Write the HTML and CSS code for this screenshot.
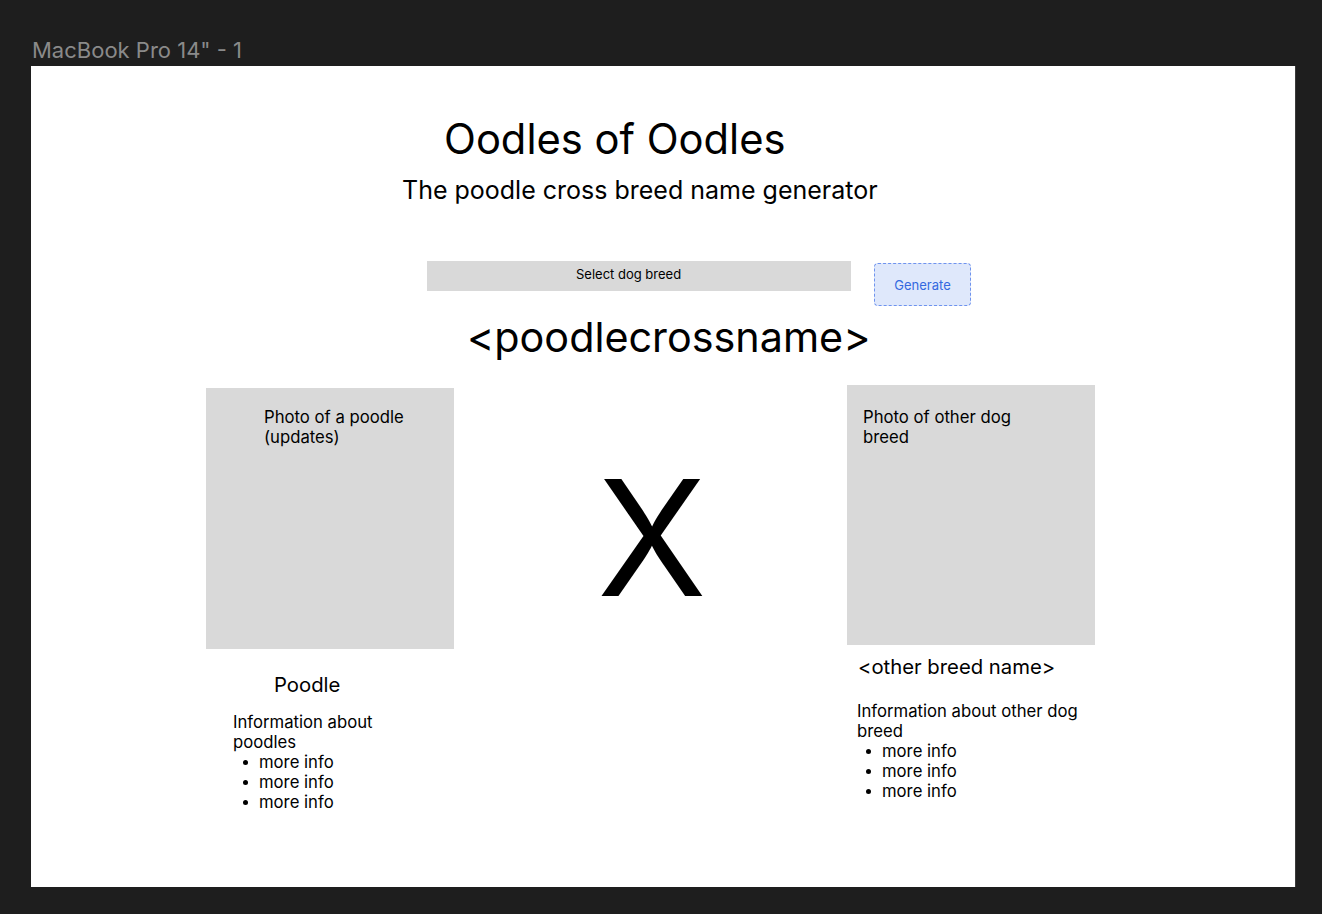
FILE: index.html
```html
<!DOCTYPE html>
<html lang="en">
<head>
<meta charset="utf-8">
<title>Oodles of Oodles</title>
<link rel="stylesheet" href="styles.css">
</head>
<body>
<div class="frame-label">MacBook Pro 14" - 1</div>
<main class="frame">
  <h1 class="title">Oodles of Oodles</h1>
  <p class="subtitle">The poodle cross breed name generator</p>
  <div class="controls">
    <div class="select">Select dog breed</div>
    <button class="generate">Generate</button>
  </div>
  <h2 class="crossname">&lt;poodlecrossname&gt;</h2>
  <section class="breeds">
    <div class="col col-left">
      <div class="photo photo-left">Photo of a poodle<br>(updates)</div>
      <h3 class="breed-name name-left">Poodle</h3>
      <div class="info info-left">
        <p>Information about<br>poodles</p>
        <ul>
          <li>more info</li>
          <li>more info</li>
          <li>more info</li>
        </ul>
      </div>
    </div>
    <div class="cross">X</div>
    <div class="col col-right">
      <div class="photo photo-right">Photo of other dog<br>breed</div>
      <h3 class="breed-name name-right">&lt;other breed name&gt;</h3>
      <div class="info info-right">
        <p>Information about other dog<br>breed</p>
        <ul>
          <li>more info</li>
          <li>more info</li>
          <li>more info</li>
        </ul>
      </div>
    </div>
  </section>
</main>
</body>
</html>
```

FILE: styles.css
```css
* { box-sizing: border-box; }
html, body { margin: 0; padding: 0; }
body {
  background: #1e1e1e;
  font-family: Inter, "Noto Sans", sans-serif;
  color: #000;
  width: 1322px;
  height: 914px;
  overflow: hidden;
}
.frame-label {
  padding: 37px 0 0 32px;
  height: 66px;
  font-size: 22px;
  line-height: 26px;
  color: #8a8a8a;
}
.frame {
  margin-left: 31px;
  width: 1264px;
  height: 821px;
  background: #fff;
  padding-top: 49px;
  box-shadow: 1px 0 0 #3a3a3a;
}
.title {
  margin: 0 0 0 413px;
  font-size: 41.7px;
  line-height: 48px;
  font-weight: 400;
}
.subtitle {
  margin: 12px 0 0 371px;
  font-size: 25px;
  line-height: 30px;
}
.controls {
  display: flex;
  align-items: flex-start;
  gap: 23px;
  margin: 56px 0 0 396px;
}
.select {
  width: 424px;
  height: 30px;
  background: #d9d9d9;
  font-size: 13px;
  line-height: 16px;
  padding: 5px 0 0 149px;
}
.generate {
  margin-top: 2px;
  width: 97px;
  height: 43px;
  background: #dfe8fb;
  border: 1px dashed #6f93ee;
  border-radius: 4px;
  color: #3468e0;
  font-family: inherit;
  font-size: 13px;
  padding: 0;
}
.crossname {
  margin: 7px 0 0 436px;
  font-size: 41.3px;
  line-height: 48px;
  font-weight: 400;
}
.breeds {
  display: flex;
  align-items: flex-start;
  margin-top: 24px;
  padding-left: 175px;
}
.col { width: 248px; }
.col-left { margin-top: 3px; }
.photo {
  width: 248px;
  background: #d9d9d9;
  font-size: 16.7px;
  line-height: 20px;
}
.photo-left { height: 261px; padding: 19px 0 0 58px; }
.photo-right { height: 260px; padding: 22px 0 0 16px; }
.breed-name {
  margin: 0;
  font-size: 20.3px;
  line-height: 24px;
  font-weight: 400;
}
.name-left { margin: 24px 0 0 68px; }
.name-right { margin: 10px 0 0 11px; }
.info {
  font-size: 16.7px;
  line-height: 20px;
}
.info p { margin: 0; }
.info ul {
  list-style: none;
  margin: 0;
  padding: 0 0 0 26px;
}
.info li { position: relative; }
.info li::before {
  content: "";
  position: absolute;
  left: -16px;
  top: 8px;
  width: 5px;
  height: 5px;
  border-radius: 50%;
  background: #000;
}
.info-left { margin: 15px 0 0 27px; }
.info-right { margin: 22px 0 0 10px; }
.info-right ul { padding-left: 25px; }
.cross {
  margin: 72px 0 0 143px;
  width: 104px;
  font-size: 161px;
  line-height: 161px;
}
.col-right { margin-left: 146px; }
```
